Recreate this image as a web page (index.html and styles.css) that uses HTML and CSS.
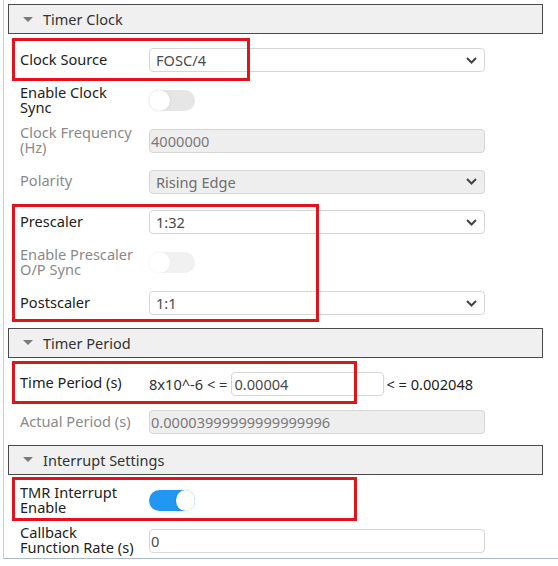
FILE: index.html
```html
<!DOCTYPE html>
<html>
<head>
<meta charset="utf-8">
<link rel="stylesheet" href="styles.css">
</head>
<body>
<div class="page">
  <div class="panel">
    <section class="group">
      <div class="group-header"><span class="caret"></span>Timer Clock</div>
      <div class="row">
        <div class="lbl">Clock Source</div>
        <div class="select"><span>FOSC/4</span><svg class="chev" width="11" height="7" viewBox="0 0 11 7"><polyline points="1,1 5.5,5.5 10,1" fill="none" stroke="#444" stroke-width="2"/></svg></div>
      </div>
      <div class="row">
        <div class="lbl">Enable Clock<br>Sync</div>
        <div class="toggle"><span class="knob"></span></div>
      </div>
      <div class="row">
        <div class="lbl dis">Clock Frequency<br>(Hz)</div>
        <div class="input disabled">4000000</div>
      </div>
      <div class="row">
        <div class="lbl dis">Polarity</div>
        <div class="select disabled"><span>Rising Edge</span><svg class="chev" width="11" height="7" viewBox="0 0 11 7"><polyline points="1,1 5.5,5.5 10,1" fill="none" stroke="#444" stroke-width="2"/></svg></div>
      </div>
      <div class="row">
        <div class="lbl">Prescaler</div>
        <div class="select"><span>1:32</span><svg class="chev" width="11" height="7" viewBox="0 0 11 7"><polyline points="1,1 5.5,5.5 10,1" fill="none" stroke="#444" stroke-width="2"/></svg></div>
      </div>
      <div class="row">
        <div class="lbl dis">Enable Prescaler<br>O/P Sync</div>
        <div class="toggle faded"><span class="knob"></span></div>
      </div>
      <div class="row">
        <div class="lbl">Postscaler</div>
        <div class="select"><span>1:1</span><svg class="chev" width="11" height="7" viewBox="0 0 11 7"><polyline points="1,1 5.5,5.5 10,1" fill="none" stroke="#444" stroke-width="2"/></svg></div>
      </div>
    </section>
    <section class="group">
      <div class="group-header"><span class="caret"></span>Timer Period</div>
      <div class="row">
        <div class="lbl">Time Period (s)</div>
        <div class="range">
          <span class="bound">8x10^-6 &lt; =</span>
          <div class="input small">0.00004</div>
          <span class="bound">&lt; = 0.002048</span>
        </div>
      </div>
      <div class="row short">
        <div class="lbl dis">Actual Period (s)</div>
        <div class="input disabled">0.00003999999999999996</div>
      </div>
    </section>
    <section class="group">
      <div class="group-header"><span class="caret"></span>Interrupt Settings</div>
      <div class="row">
        <div class="lbl">TMR Interrupt<br>Enable</div>
        <div class="toggle on"><span class="knob"></span></div>
      </div>
      <div class="row">
        <div class="lbl">Callback<br>Function Rate (s)</div>
        <div class="input">0</div>
      </div>
    </section>
  </div>
  <div class="mark m1"></div>
  <div class="mark m2"></div>
  <div class="mark m3"></div>
  <div class="mark m4"></div>
</div>
</body>
</html>
```
FILE: styles.css
```css
* { box-sizing: border-box; }
html, body { margin: 0; padding: 0; background: #fff; }
body {
  font-family: "Noto Sans", "Open Sans", sans-serif;
  font-size: 14.6px;
  color: #222;
}
.page {
  position: relative;
  width: 558px;
  height: 566px;
  overflow: hidden;
}
.panel {
  margin-left: 3px;
  width: 555px;
  height: 559px;
  border-left: 1px solid #c9d2dc;
  border-bottom: 1px solid #a9b9c9;
  padding-left: 4px;
  overflow: hidden;
}
.group-header {
  margin-top: 4px;
  margin-bottom: 6px;
  width: 535px;
  height: 30px;
  background: #f0f0f0;
  border: 1px solid #4a4a4a;
  display: flex;
  align-items: center;
  color: #333;
  font-size: 14.5px;
}
.caret {
  width: 0;
  height: 0;
  border-left: 5px solid transparent;
  border-right: 5px solid transparent;
  border-top: 5px solid #7a7a7a;
  margin-left: 14px;
  margin-right: 10px;
}
.row {
  display: flex;
  align-items: center;
  height: 40.5px;
  padding-left: 12px;
}
.row.short { height: 36.5px; }
.lbl {
  width: 129px;
  flex: none;
  padding-right: 4px;
  line-height: 15px;
  color: #222;
  white-space: nowrap;
  margin-top: -2px;
}
.lbl.dis { color: #8a8a8a; }
.select, .input {
  width: 336px;
  height: 24px;
  border: 1px solid #d6d6d6;
  border-radius: 4px;
  background: #fff;
  display: flex;
  align-items: center;
  padding-left: 6px;
  color: #4a4a4a;
}
.select span { flex: 1; }
.chev { margin-right: 7px; }
.disabled { background: #eeeeee; color: #7a7a7a; }
.select.disabled { color: #6e6e6e; }
.input { padding-left: 1px; }
.input.disabled { padding-left: 1px; }
.range {
  display: flex;
  align-items: center;
  color: #333;
}
.range .bound:first-child { margin-right: 4px; }
.range .bound:last-child { margin-left: 2px; color: #222; }
.input.small { width: 153px; padding-left: 2px; }
.toggle {
  width: 46px;
  height: 21px;
  border-radius: 11px;
  background: #e6e6e6;
  position: relative;
}
.toggle .knob {
  position: absolute;
  left: 0;
  top: 0;
  width: 21px;
  height: 21px;
  border-radius: 50%;
  background: #fff;
  box-shadow: 0 0 2px rgba(0,0,0,0.15);
}
.toggle.faded { background: #f1f1f1; }
.toggle.faded .knob { box-shadow: 0 0 2px rgba(0,0,0,0.06); }
.toggle.on { background: #2196f3; }
.toggle.on .knob { left: 27px; width: 19px; box-shadow: 0 0 3px rgba(0,0,0,0.1); }
.mark {
  position: absolute;
  border: 3px solid #e2131b;
}
.m1 { left: 12px; top: 38px; width: 238px; height: 43px; }
.m2 { left: 12px; top: 204px; width: 307px; height: 118px; }
.m3 { left: 12px; top: 361px; width: 345px; height: 43px; }
.m4 { left: 12px; top: 477px; width: 345px; height: 44px; }
```
